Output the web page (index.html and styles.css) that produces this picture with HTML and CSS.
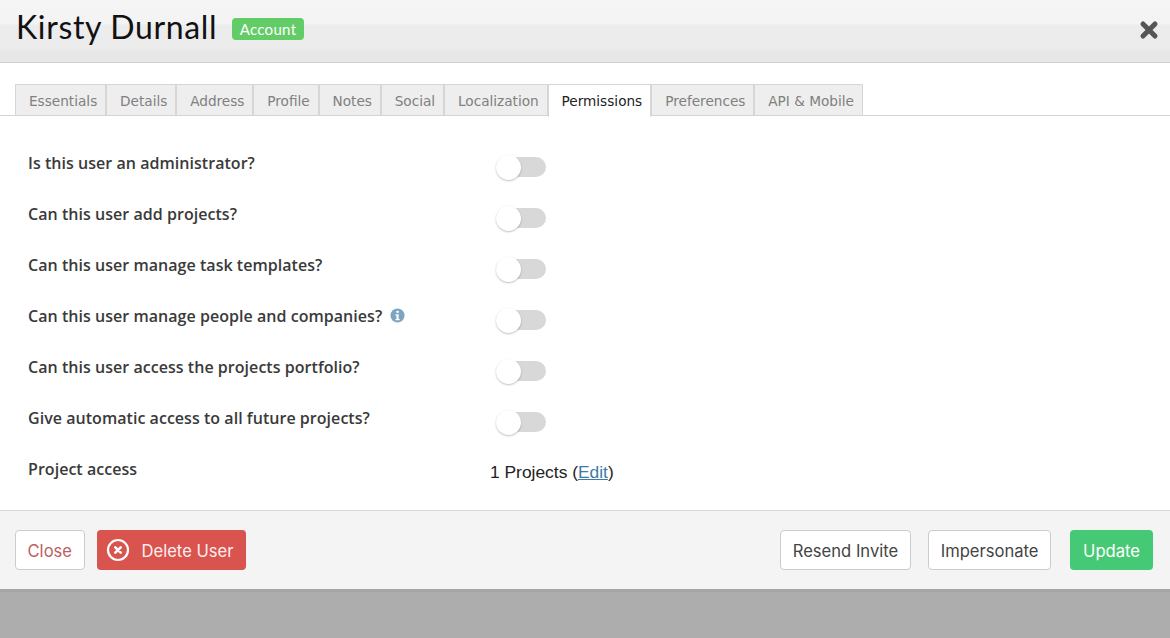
FILE: index.html
```html
<!DOCTYPE html>
<html lang="en">
<head>
    <meta charset="UTF-8">
    <title>Kirsty Durnall - Permissions</title>
    <link rel="stylesheet" href="styles.css">
</head>
<body>
    <div class="modal">
        <div class="modal-header">
            <h1>Kirsty Durnall</h1>
            <span class="badge">Account</span>
            <svg class="close-x" viewBox="0 0 20 20" width="20" height="20"><path d="M4 4 L16 16 M16 4 L4 16" stroke="#555" stroke-width="5" stroke-linecap="round"/></svg>
        </div>

        <div class="tabs">
            <a class="tab">Essentials</a>
            <a class="tab">Details</a>
            <a class="tab">Address</a>
            <a class="tab">Profile</a>
            <a class="tab">Notes</a>
            <a class="tab">Social</a>
            <a class="tab">Localization</a>
            <a class="tab active">Permissions</a>
            <a class="tab">Preferences</a>
            <a class="tab">API &amp; Mobile</a>
        </div>

        <div class="form">
            <div class="row">
                <label>Is this user an administrator?</label>
                <span class="toggle"><span class="knob"></span></span>
            </div>
            <div class="row">
                <label>Can this user add projects?</label>
                <span class="toggle"><span class="knob"></span></span>
            </div>
            <div class="row">
                <label>Can this user manage task templates?</label>
                <span class="toggle"><span class="knob"></span></span>
            </div>
            <div class="row">
                <label>Can this user manage people and companies?
                    <svg class="info" viewBox="0 0 16 16" width="15" height="15"><circle cx="8" cy="8" r="7.5" fill="#7ba5c2"/><rect x="6.9" y="2.8" width="2.4" height="2.4" rx=".6" fill="#fff"/><path d="M5.8 6.6h3.4v5h1.1v1.5H5.8v-1.5h1.1V8.1H5.8z" fill="#fff"/></svg>
                </label>
                <span class="toggle"><span class="knob"></span></span>
            </div>
            <div class="row">
                <label>Can this user access the projects portfolio?</label>
                <span class="toggle"><span class="knob"></span></span>
            </div>
            <div class="row">
                <label>Give automatic access to all future projects?</label>
                <span class="toggle"><span class="knob"></span></span>
            </div>
            <div class="row">
                <label>Project access</label>
                <span class="access">1 Projects (<a class="edit">Edit</a>)</span>
            </div>
        </div>

        <div class="modal-footer">
            <button class="btn btn-close">Close</button>
            <button class="btn btn-delete">
                <svg viewBox="0 0 24 24" width="24" height="24"><circle cx="12" cy="12" r="10" fill="none" stroke="#fff" stroke-width="2.2"/><path d="M9.3 9.3 L14.7 14.7 M14.7 9.3 L9.3 14.7" stroke="#fff" stroke-width="2.6" stroke-linecap="round"/></svg>
                <span class="btn-label">Delete User</span>
            </button>
            <div class="spacer"></div>
            <button class="btn">Resend Invite</button>
            <button class="btn btn-imp">Impersonate</button>
            <button class="btn btn-update">Update</button>
        </div>
    </div>
</body>
</html>
```

FILE: styles.css
```css
html, body {
    height: 100%;
}
body {
    margin: 0;
    background-color: #adadad;
    font-family: "Lato", "Open Sans", sans-serif;
    overflow: hidden;
}
.modal {
    background: white;
    border-bottom: 3px solid #a5a5a5;
}
.modal-header {
    height: 54px;
    display: flex;
    align-items: center;
    padding: 0 11px 8px 16px;
    background: linear-gradient(#f6f6f6, #f3f3f3 24px, #ececec 25px, #ebebeb 50px, #e7e7e7 52px, #e7e7e7);
    border-bottom: 1px solid #cfcfcf;
}
h1 {
    margin: -2px 0 0;
    font-size: 32px;
    font-weight: 400;
    color: #111;
    letter-spacing: 0.65px;
}
.badge {
    margin-left: 15px;
    margin-top: 4px;
    background-color: #62cc66;
    color: white;
    font-size: 15px;
    line-height: 22px;
    padding: 0 7.5px;
    border-radius: 4px;
    letter-spacing: 0.3px;
}
.close-x {
    margin-left: auto;
    margin-top: 5px;
}
.tabs {
    display: flex;
    padding: 21px 15px 0;
    border-bottom: 1px solid #d4d4d4;
    height: 31px;
}
.tab {
    background-color: #eeeeee;
    border: 1px solid #d6d6d6;
    border-bottom: none;
    padding: 0 7.8px 0 13px;
    font-family: "DejaVu Sans", sans-serif;
    font-size: 13.65px;
    line-height: 32px;
    color: #808080;
}
.tab.active {
    background: white;
    color: #222;
    height: 31px;
    margin-bottom: -1px;
    padding-bottom: 1px;
    padding-right: 8px;
}
.form {
    padding: 22px 28px 15px;
}
.row {
    display: flex;
    height: 51px;
    color: #333;
}
.row label {
    width: 462px;
    font-family: "Open Sans", sans-serif;
    font-size: 16px;
    font-weight: 600;
    letter-spacing: 0.04px;
    line-height: 51px;
    color: #3a3a3a;
}
.info {
    vertical-align: -1px;
    margin-left: 4px;
}
.toggle {
    position: relative;
    width: 50px;
    height: 20px;
    margin: 19px 0 0 6px;
    background-color: #d8d8d8;
    border-radius: 10px;
}
.knob {
    position: absolute;
    left: 0;
    top: -2px;
    width: 25px;
    height: 25px;
    background: white;
    border-radius: 50%;
    box-shadow: 0 1px 2px rgba(0,0,0,0.25);
}
.access {
    font-family: "Liberation Sans", Arial, sans-serif;
    font-size: 17.4px;
    line-height: 57px;
    color: #222;
}
.edit {
    color: #3d7ba3;
    text-decoration: underline;
}
.modal-footer {
    display: flex;
    align-items: flex-start;
    gap: 17px;
    height: 59px;
    padding: 19px 17px 0 15px;
    background-color: #f4f4f4;
    border-top: 1px solid #d8d8d8;
}
.spacer {
    flex: 1;
}
.btn {
    height: 40px;
    padding: 2px 12px 0;
    background: white;
    border: 1px solid #cccccc;
    border-radius: 4px;
    font-family: "Inter", "Open Sans", sans-serif;
    font-size: 16.6px;
    color: #444;
}
.btn-close {
    color: #c0605f;
    padding: 2px 11.5px 0;
    margin-right: -5px;
}
.btn-imp {
    padding: 2px 11.5px 0;
}
.btn-delete {
    display: flex;
    align-items: center;
    gap: 12px;
    padding: 0 12px 0 9px;
    background-color: #d9534f;
    border: none;
    color: #fbeeee;
}
.btn-label {
    padding-top: 2px;
}
.btn-update {
    margin-left: 2px;
    background-color: #46c974;
    border: none;
    color: white;
    padding: 2px 13px 0;
}
```
